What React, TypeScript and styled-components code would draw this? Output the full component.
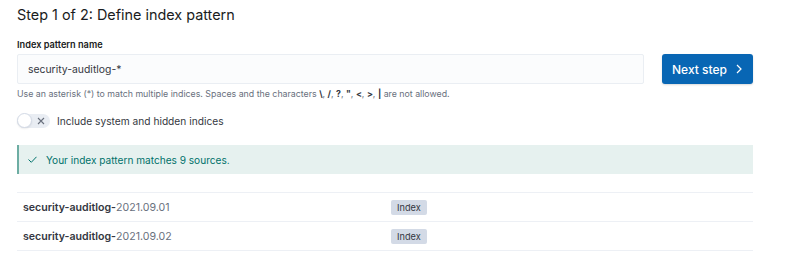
import React from "react";
import styled, { createGlobalStyle } from "styled-components";

const Global = createGlobalStyle`
  html, body { margin: 0; padding: 0; background: #fff; }
  body { font-family: Inter, "Noto Sans", sans-serif; color: #343741; -webkit-font-smoothing: antialiased; }
`;

const Page = styled.div`
  width: 808px;
  height: 271px;
  box-sizing: border-box;
  padding: 5px 55px 0 17px;
  display: flex;
  flex-direction: column;
`;

const Title = styled.h1`
  margin: 0;
  font-size: 14.4px;
  font-weight: 400;
  line-height: 20px;
  color: #1a1c21;
`;

const Label = styled.label`
  margin-top: 14px;
  font-size: 9.2px;
  font-weight: 600;
  line-height: 12px;
  color: #1a1c21;
`;

const FieldRow = styled.div`
  display: flex;
  align-items: flex-start;
  gap: 18px;
  margin-top: 3px;
`;

const FieldCol = styled.div`
  flex: 1;
  display: flex;
  flex-direction: column;
`;

const Input = styled.div`
  height: 30px;
  box-sizing: border-box;
  background: #fbfcfd;
  border: 1px solid #eaeef3;
  border-radius: 2px;
  display: flex;
  align-items: center;
  padding-left: 10px;
  font-size: 10.4px;
  color: #343741;
`;

const Help = styled.div`
  margin-top: 4px;
  font-size: 8.8px;
  line-height: 12px;
  color: #69707d;
  b { color: #343741; font-weight: 700; }
`;

const Button = styled.button`
  width: 91px;
  height: 30px;
  border: none;
  border-radius: 3px;
  background: #0866b4;
  color: #fff;
  font-family: inherit;
  font-size: 12px;
  font-weight: 500;
  display: flex;
  align-items: center;
  justify-content: center;
  gap: 8px;
  padding: 0;
  box-shadow: 0 1px 2px rgba(0,0,0,0.15);
`;

const ToggleRow = styled.div`
  display: flex;
  align-items: center;
  gap: 7px;
  margin-top: 14px;
  font-size: 10.2px;
  color: #343741;
`;

const Track = styled.div`
  position: relative;
  width: 33px;
  height: 14px;
  border-radius: 7px;
  background: #e9edf3;
  display: flex;
  align-items: center;
  justify-content: flex-end;
  padding-right: 5px;
  box-sizing: border-box;
`;

const Knob = styled.div`
  position: absolute;
  left: 0;
  top: -1px;
  width: 15px;
  height: 15px;
  border-radius: 50%;
  background: #fff;
  box-sizing: border-box;
  border: 1px solid #d3dae6;
  box-shadow: 0 1px 2px rgba(0,0,0,0.08);
`;

const Callout = styled.div`
  margin-top: 17px;
  height: 29px;
  box-sizing: border-box;
  background: #e6f1ef;
  border-left: 2px solid #6dada3;
  display: flex;
  align-items: center;
  gap: 9px;
  padding-left: 9px;
  font-size: 10.1px;
  color: #00726b;
`;

const Table = styled.div`
  margin-top: 18px;
  border-top: 1px solid #edf0f5;
`;

const Row = styled.div`
  height: 28px;
  border-bottom: 1px solid #edf0f5;
  display: grid;
  grid-template-columns: 368px auto;
  align-items: center;
  padding-left: 6px;
  font-size: 10.6px;
  color: #69707d;
  b { color: #343741; font-weight: 600; }
`;

const Badge = styled.span`
  justify-self: start;
  background: #d3dae6;
  color: #343741;
  font-size: 9.2px;
  line-height: 15px;
  padding: 0 6px;
  border-radius: 2px;
`;

const rows = ["2021.09.01", "2021.09.02"];

export default function App() {
  return (
    <>
      <Global />
      <Page>
        <Title>Step 1 of 2: Define index pattern</Title>
        <Label>Index pattern name</Label>
        <FieldRow>
          <FieldCol>
            <Input>security-auditlog-*</Input>
            <Help>
              Use an asterisk (*) to match multiple indices. Spaces and the characters <b>\</b>, <b>/</b>, <b>?</b>, <b>"</b>, <b>&lt;</b>, <b>&gt;</b>, <b>|</b> are not allowed.
            </Help>
          </FieldCol>
          <Button>
            Next step
            <svg width="8" height="10" viewBox="0 0 8 10" fill="none">
              <path d="M2 1l4 4-4 4" stroke="#fff" strokeWidth="1.2" />
            </svg>
          </Button>
        </FieldRow>
        <ToggleRow>
          <Track>
            <Knob />
            <svg width="8" height="8" viewBox="0 0 8 8">
              <path d="M1 1l6 6M7 1L1 7" stroke="#69707d" strokeWidth="1.1" />
            </svg>
          </Track>
          Include system and hidden indices
        </ToggleRow>
        <Callout>
          <svg width="9" height="7" viewBox="0 0 9 7" fill="none">
            <path d="M0.5 3.5l2.8 2.8L8.5 0.8" stroke="#00726b" strokeWidth="1" />
          </svg>
          Your index pattern matches 9 sources.
        </Callout>
        <Table>
          {rows.map((r) => (
            <Row key={r}>
              <span>
                <b>security-auditlog-</b>
                {r}
              </span>
              <Badge>Index</Badge>
            </Row>
          ))}
        </Table>
      </Page>
    </>
  );
}
